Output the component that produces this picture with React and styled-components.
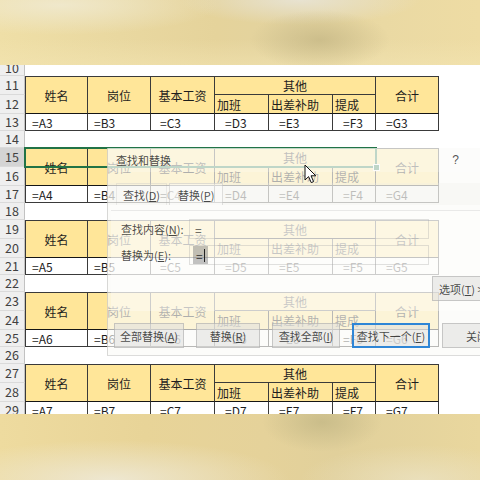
import React from "react";
import styled, { createGlobalStyle } from "styled-components";

const GlobalStyle = createGlobalStyle`
  html, body {
    margin: 0;
    padding: 0;
  }
  body {
    width: 480px;
    height: 480px;
    overflow: hidden;
    background: #fff;
    font-family: "Noto Sans CJK SC", "Noto Sans", sans-serif;
  }
`;

const COLS = "25px 63px 63px 64px 54px 64px 43px 63px 1fr";
const LINE = "#3a3a3a";

const Frame = styled.div`
  width: 480px;
  height: 480px;
  display: flex;
  flex-direction: column;
  overflow: hidden;
`;

const TopBlur = styled.div`
  flex: none;
  height: 65px;
  background:
    radial-gradient(ellipse 70px 30px at 320px 40px, rgba(196, 182, 132, 0.75), transparent),
    radial-gradient(ellipse 120px 25px at 300px 0px, rgba(232, 228, 214, 0.9), transparent),
    radial-gradient(ellipse 160px 30px at 60px 5px, rgba(240, 234, 210, 0.85), transparent),
    linear-gradient(180deg, rgba(255, 255, 255, 0) 60%, rgba(244, 230, 180, 0.5) 100%),
    linear-gradient(90deg, #efdfa7 0%, #e9d8a0 25%, #e5d39b 45%, #e3d39f 60%, #ead9a3 80%, #eedca4 100%);
`;

const BottomBlur = styled.div`
  flex: none;
  height: 66px;
  background:
    radial-gradient(ellipse 60px 30px at 322px 8px, rgba(196, 184, 134, 0.8), transparent),
    radial-gradient(ellipse 180px 40px at 110px 66px, rgba(238, 232, 212, 0.95), transparent),
    radial-gradient(ellipse 120px 35px at 420px 66px, rgba(236, 228, 200, 0.7), transparent),
    linear-gradient(90deg, #eedb9f 0%, #e8d498 30%, #e5d29a 55%, #e1d09b 70%, #e9d79e 100%);
`;

const Sheet = styled.div`
  position: relative;
  flex: none;
  height: 349px;
  overflow: hidden;
  background: #fff;
  display: flex;
  flex-direction: column;
`;

const TopRow = styled.div`
  display: grid;
  grid-template-columns: ${COLS};
  height: 11px;
  flex: none;
  overflow: hidden;
`;

const Block = styled.div`
  position: relative;
  flex: none;
  display: grid;
  grid-template-columns: ${COLS};
  grid-template-rows: 19px 19px 17px 17px;
`;

const RowHead = styled.div`
  grid-column: 1;
  grid-row: ${(p) => p.$row};
  box-sizing: border-box;
  background: ${(p) => (p.$active ? "#d4d4d4" : "#efefef")};
  border-right: 1px solid ${(p) => (p.$active ? "#217346" : "#c2c2c2")};
  border-bottom: 1px solid #dadada;
  display: flex;
  align-items: ${(p) => (p.$clip ? "flex-end" : "center")};
  justify-content: center;
  font-size: 12.5px;
  line-height: 14px;
  color: #404040;
  overflow: ${(p) => (p.$clip ? "hidden" : "visible")};
`;

const HeadCell = styled.div`
  grid-column: ${(p) => p.$col};
  grid-row: ${(p) => p.$row};
  box-sizing: border-box;
  background: #ffe699;
  border-right: 1px solid ${LINE};
  border-bottom: 1px solid ${(p) => (p.$strong ? "#151515" : LINE)};
  border-top: ${(p) => (p.$top ? `1px solid ${LINE}` : "none")};
  border-left: ${(p) => (p.$left ? `1px solid ${LINE}` : "none")};
  display: flex;
  align-items: center;
  justify-content: ${(p) => (p.$start ? "flex-start" : "center")};
  padding-left: ${(p) => (p.$start ? "2px" : "0")};
  font-size: 12px;
  color: #1d1d1d;
  white-space: nowrap;
`;

const DataCell = styled.div`
  grid-column: ${(p) => p.$col};
  grid-row: 3;
  box-sizing: border-box;
  background: #fff;
  border-right: 1px solid ${LINE};
  border-bottom: 1px solid ${LINE};
  border-left: ${(p) => (p.$left ? `1px solid ${LINE}` : "none")};
  padding-left: ${(p) => p.$indent}px;
  display: flex;
  align-items: center;
  font-size: 12px;
  color: #1d1d1d;
  white-space: nowrap;
`;

const Selection = styled.div`
  position: absolute;
  left: 24px;
  top: -1px;
  width: 353px;
  height: 21px;
  box-sizing: border-box;
  border: 2px solid #217346;
  pointer-events: none;

  &::after {
    content: "";
    position: absolute;
    right: -5px;
    bottom: -5px;
    width: 5px;
    height: 5px;
    background: #217346;
    border: 1px solid #fff;
  }
`;

/* find & replace dialog, caught mid fade */
const Dialog = styled.div`
  position: absolute;
  left: 107px;
  top: 83px;
  width: 400px;
  height: 208px;
  box-sizing: border-box;
  background: rgba(250, 250, 247, 0.66);
  border-left: 1px solid rgba(150, 150, 150, 0.35);
  border-bottom: 1px solid rgba(150, 150, 150, 0.3);
  display: flex;
  flex-direction: column;
  font-size: 11px;
  color: rgba(30, 30, 30, 0.82);
`;

const TitleBar = styled.div`
  height: 24px;
  display: flex;
  align-items: center;
  justify-content: space-between;
  padding: 0 48px 0 8px;
  background: rgba(255, 255, 255, 0.2);
`;

const Title = styled.span`
  font-size: 11px;
  color: rgba(40, 40, 40, 0.85);
`;

const Help = styled.span`
  font-family: "Liberation Sans", sans-serif;
  font-size: 12px;
  color: rgba(40, 40, 40, 0.8);
`;

const TabRow = styled.div`
  margin-top: 11px;
  height: 22px;
  display: flex;
  padding-left: 8px;
  background: rgba(235, 235, 230, 0.25);
`;

const Tab = styled.div`
  display: flex;
  align-items: center;
  padding: 0 ${(p) => (p.$active ? "8px" : "6px")};
  background: ${(p) => (p.$active ? "rgba(255,255,255,0.35)" : "transparent")};
  border: 1px solid rgba(170, 170, 170, ${(p) => (p.$active ? 0.35 : 0.2)});
  border-bottom: none;
  margin-right: 2px;
  font-size: 11px;

  u {
    text-decoration: underline;
  }
`;

const Panel = styled.div`
  margin: 5px 2px 0 3px;
  padding: 8px 0 10px 10px;
  display: flex;
  flex-direction: column;
  gap: 6px;
  background: rgba(255, 255, 255, 0.3);
  border-top: 1px solid rgba(190, 190, 190, 0.3);
`;

const FieldRow = styled.div`
  height: 20px;
  display: flex;
  align-items: center;
`;

const Label = styled.span`
  width: 68px;
  flex: none;
  font-size: 11px;
`;

const Field = styled.div`
  width: 240px;
  height: 20px;
  box-sizing: border-box;
  border: 1px solid rgba(170, 170, 170, 0.35);
  display: flex;
  align-items: center;
  padding-left: ${(p) => (p.$selected ? "3px" : "5px")};
  font-size: 12px;
`;

const SelectedText = styled.span`
  display: inline-flex;
  align-items: center;
  height: 18px;
  padding: 0 3px;
  background: rgba(120, 120, 120, 0.45);
  color: rgba(20, 20, 20, 0.9);

  &::after {
    content: "";
    width: 1px;
    height: 13px;
    margin-left: 1px;
    background: #222;
  }
`;

const OptionsRow = styled.div`
  margin-top: 5px;
  display: flex;
  padding-left: 311px;
`;

const Button = styled.div`
  flex: none;
  width: ${(p) => p.$w}px;
  height: 25px;
  box-sizing: border-box;
  display: flex;
  align-items: center;
  justify-content: ${(p) => (p.$left ? "flex-start" : "center")};
  padding-left: ${(p) => (p.$left ? "6px" : "0")};
  background: rgba(222, 222, 220, 0.55);
  border: ${(p) => (p.$focus ? "2px solid #2f86d6" : "1px solid rgba(160,160,160,0.5)")};
  font-size: 11px;
  white-space: nowrap;
  color: rgba(30, 30, 30, 0.82);
`;

const ButtonRow = styled.div`
  margin-top: 12px;
  display: flex;
  gap: 12px;
  padding-left: 6px;
`;

const Cursor = styled.svg`
  position: absolute;
  left: 304px;
  top: 99px;
  width: 13px;
  height: 20px;
`;

const blocks = [
  { start: 11, n: 3 },
  { start: 15, n: 4, selected: true },
  { start: 19, n: 5 },
  { start: 23, n: 6 },
  { start: 27, n: 7 },
];

const dataCols = [
  { col: 2, l: "A", indent: 6, left: true },
  { col: 3, l: "B", indent: 6 },
  { col: 4, l: "C", indent: 9 },
  { col: 5, l: "D", indent: 10 },
  { col: 6, l: "E", indent: 10 },
  { col: 7, l: "F", indent: 10 },
  { col: 8, l: "G", indent: 10 },
];

function TableBlock({ start, n, selected }) {
  return (
    <Block>
      {[0, 1, 2, 3].map((i) => (
        <RowHead key={i} $row={i + 1} $active={selected && i === 0}>
          {start + i}
        </RowHead>
      ))}
      <HeadCell $col="2" $row="1 / span 2" $top $left $strong>姓名</HeadCell>
      <HeadCell $col="3" $row="1 / span 2" $top $strong>岗位</HeadCell>
      <HeadCell $col="4" $row="1 / span 2" $top $strong>基本工资</HeadCell>
      <HeadCell $col="5 / span 3" $row="1" $top>其他</HeadCell>
      <HeadCell $col="5" $row="2" $start $strong>加班</HeadCell>
      <HeadCell $col="6" $row="2" $start $strong>出差补助</HeadCell>
      <HeadCell $col="7" $row="2" $start $strong>提成</HeadCell>
      <HeadCell $col="8" $row="1 / span 2" $top $strong>合计</HeadCell>
      {dataCols.map((c) => (
        <DataCell key={c.l} $col={c.col} $indent={c.indent} $left={c.left}>
          ={c.l}
          {n}
        </DataCell>
      ))}
      {selected && <Selection />}
    </Block>
  );
}

export default function App() {
  return (
    <Frame>
      <GlobalStyle />
      <TopBlur />
      <Sheet>
        <TopRow>
          <RowHead $row={1} $clip>10</RowHead>
        </TopRow>
        {blocks.map((b) => (
          <TableBlock key={b.start} {...b} />
        ))}

        <Dialog>
          <TitleBar>
            <Title>查找和替换</Title>
            <Help>?</Help>
          </TitleBar>
          <TabRow>
            <Tab>
              查找(<u>D</u>)
            </Tab>
            <Tab $active>
              替换(<u>P</u>)
            </Tab>
          </TabRow>
          <Panel>
            <FieldRow>
              <Label>
                查找内容(<u>N</u>):
              </Label>
              <Field>=</Field>
            </FieldRow>
            <FieldRow>
              <Label>
                替换为(<u>E</u>):
              </Label>
              <Field $selected>
                <SelectedText>=</SelectedText>
              </Field>
            </FieldRow>
            <OptionsRow>
              <Button $w={80} $left>
                选项(<u>T</u>) &gt;&gt;
              </Button>
            </OptionsRow>
          </Panel>
          <ButtonRow>
            <Button $w={70}>
              全部替换(<u>A</u>)
            </Button>
            <Button $w={64}>
              替换(<u>R</u>)
            </Button>
            <Button $w={68}>
              查找全部(<u>I</u>)
            </Button>
            <Button $w={78} $focus>
              查找下一个(<u>F</u>)
            </Button>
            <Button $w={70}>关闭</Button>
          </ButtonRow>
        </Dialog>

        <Cursor viewBox="0 0 13 20">
          <path
            d="M1 1 L1 16 L4.6 12.6 L7.2 18.6 L9.6 17.6 L7 11.8 L11.8 11.8 Z"
            fill="#fff"
            stroke="#111"
            strokeWidth="1"
            strokeLinejoin="round"
          />
        </Cursor>
      </Sheet>
      <BottomBlur />
    </Frame>
  );
}
